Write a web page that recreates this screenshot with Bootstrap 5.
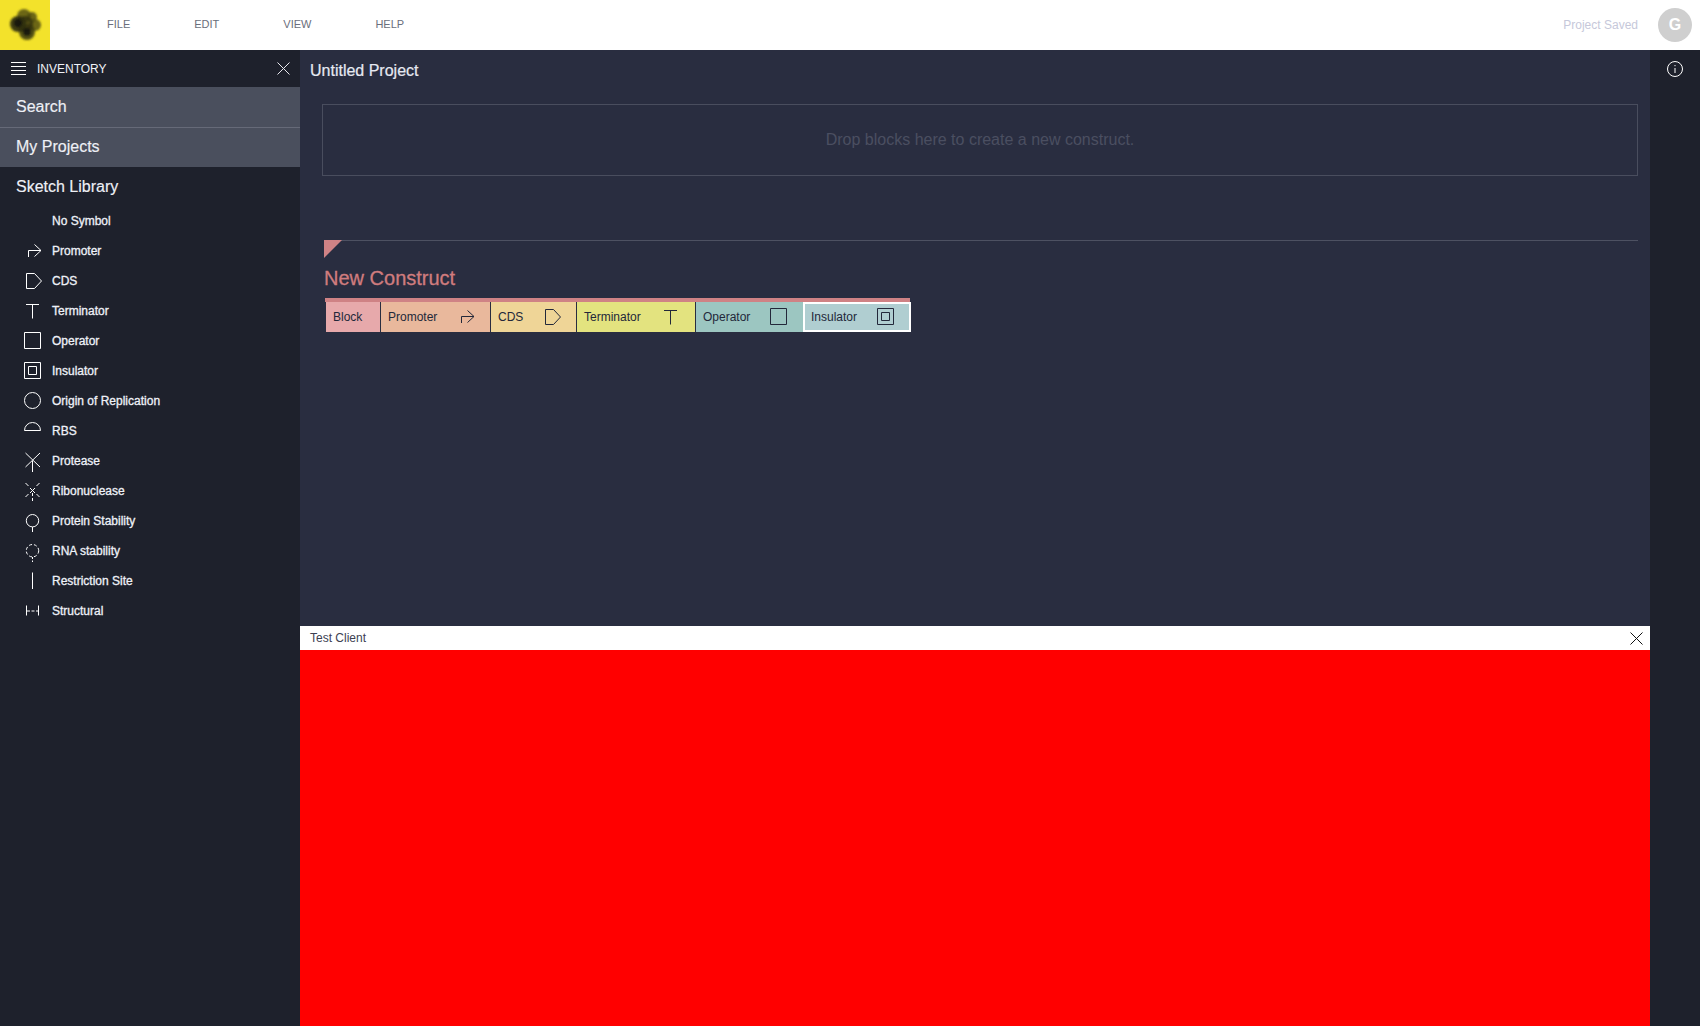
<!DOCTYPE html>
<html lang="en">
<head>
    <meta charset="UTF-8">
    <meta name="viewport" content="width=device-width, initial-scale=1.0">
    <title>Untitled Project</title>
    <link href="https://cdn.jsdelivr.net/npm/bootstrap@5.3.0/dist/css/bootstrap.min.css" rel="stylesheet">
    <style>
        html, body { height: 100%; overflow: hidden; }
        body { font-family: "Liberation Sans", Arial, sans-serif; background: #292d40; }
        svg { display: block; }
        .app-root { height: 1026px; }

        /* top bar */
        .top-bar { height: 50px; background: #fff; flex: none; }
        .logo-box { width: 50px; height: 50px; background: #f3e22b; }
        .menu-list { padding-left: 57px; gap: 64px; }
        .menu-item { font-size: 11px; color: #6a6e7b; margin-top: -2px; }
        .save-status { font-size: 12px; color: #c6c8da; margin-right: 20px; margin-top: -1px; }
        .user-dot { width: 34px; height: 34px; border-radius: 50%; background: #cfcfcf; color: #fff; font-size: 16px; font-weight: 700; margin-right: 8px; }

        /* inventory */
        .inv-side { width: 300px; background: #1e212c; color: #fff; flex: none; }
        .inv-head { height: 37px; padding: 0 10px 0 11px; font-size: 12px; color: #f0f2f8; }
        .inv-head-label { margin-left: 11px; }
        .inv-section { height: 39px; padding-left: 16px; font-size: 16px; color: #eef0f6; -webkit-text-stroke: .15px #eef0f6; }
        .inv-section-on { background: #4a4f5d; }
        .inv-rule { border-bottom: 1px solid #666a78; height: 41px; }
        .inv-lift { padding-bottom: 2px; }
        .sym-row { height: 30px; font-size: 12px; color: #eef1f8; -webkit-text-stroke: .3px #eef1f8; }
        .sym-icon { width: 52px; padding-left: 22px; flex: none; }
        .sym-icon svg { width: 22px; height: 22px; }

        /* canvas */
        .work-area { min-width: 0; }
        .project-title { font-size: 16px; color: #e6e9f2; padding: 9px 0 0 10px; height: 54px; -webkit-text-stroke: .2px #e6e9f2; }
        .drop-zone { height: 72px; margin: 0 12px 0 22px; border: 1px solid #494d5e; color: #4b4f61; font-size: 16px; }
        .construct-wrap { margin: 64px 12px 0 24px; border-top: 1px solid #4d5162; position: relative; height: 386px; }
        .corner-mark { position: absolute; left: 0; top: -1px; width: 0; height: 0; border-style: solid; border-width: 18px 18px 0 0; border-color: #cf8285 transparent transparent transparent; }
        .construct-name { font-size: 20px; color: #d07c7e; padding-top: 26px; height: 57px; line-height: 23px; -webkit-text-stroke: .3px #d07c7e; }
        .block-strip { width: 585px; margin-left: 1px; border-top: 4px solid #cf8285; height: 34px; }
        .seq-block { flex: none; height: 30px; font-size: 12px; color: #23283a; padding: 0 13px 0 7px; border-left: 1px solid #292d40; }
        .seq-block svg { width: 22px; height: 22px; margin-left: auto; }
        .b-block { width: 55px; background: #e7a9ab; }
        .b-promoter { width: 110px; background: #e9b89c; }
        .b-cds { width: 86px; background: #efd597; }
        .b-term { width: 119px; background: #e3e37f; }
        .b-op { width: 108px; background: #9cc6c1; }
        .b-ins { width: 108px; background: #b0ced1; border: 2px solid #fff; padding: 0 12px 0 6px; }

        /* test client */
        .test-head { height: 24px; background: #fff; font-size: 12px; color: #3d4152; padding: 0 7px 0 10px; flex: none; }
        .test-body { height: 376px; background: #f00; flex: none; }

        /* right rail */
        .info-rail { width: 50px; background: #1e212c; flex: none; padding-top: 11px; }
    </style>
</head>
<body>
    <div class="app-root d-flex flex-column">
        <!-- top bar -->
        <header class="top-bar d-flex align-items-center">
            <div class="logo-box d-flex align-items-center justify-content-center">
                <svg width="36" height="36" viewBox="0 0 36 36">
                    <defs><filter id="soft"><feGaussianBlur stdDeviation="1.2"/></filter></defs>
                    <g filter="url(#soft)">
                        <circle cx="17" cy="9" r="7" fill="#4a4712" fill-opacity=".8"/>
                        <circle cx="25" cy="10" r="5" fill="#4a4712" fill-opacity=".8"/>
                        <circle cx="28" cy="18" r="6" fill="#4a4712" fill-opacity=".8"/>
                        <circle cx="20" cy="25" r="8" fill="#3b3910" fill-opacity=".85"/>
                        <circle cx="11" cy="17" r="8" fill="#2a2a10" fill-opacity=".9"/>
                        <circle cx="18" cy="17" r="8" fill="#2f2e10" fill-opacity=".8"/>
                        <circle cx="11" cy="16" r="4" fill="#111108" fill-opacity=".8"/>
                        <circle cx="20" cy="25" r="4" fill="#111108" fill-opacity=".8"/>
                    </g>
                </svg>
            </div>
            <div class="menu-list d-flex">
                <div class="menu-item">FILE</div>
                <div class="menu-item">EDIT</div>
                <div class="menu-item">VIEW</div>
                <div class="menu-item">HELP</div>
            </div>
            <div class="ms-auto d-flex align-items-center">
                <span class="save-status">Project Saved</span>
                <div class="user-dot d-flex align-items-center justify-content-center">G</div>
            </div>
        </header>

        <div class="d-flex flex-grow-1 overflow-hidden">
            <!-- inventory -->
            <aside class="inv-side">
                <div class="inv-head d-flex align-items-center">
                    <svg width="15" height="13" viewBox="0 0 15 13" stroke="#fff" stroke-width="1"><path d="M0 .5h15M0 4.500h15M0 8.500h15M0 12.500h15"/></svg>
                    <span class="inv-head-label">INVENTORY</span>
                    <svg class="ms-auto" width="13" height="13" viewBox="0 0 13 13" stroke="#e8e8ee" fill="none"><path d="M.5.5l12 12M12.500.5l-12 12"/></svg>
                </div>
                <div class="inv-section inv-section-on inv-rule d-flex align-items-center">Search</div>
                <div class="inv-section inv-section-on inv-lift d-flex align-items-center">My Projects</div>
                <div class="inv-section d-flex align-items-center">Sketch Library</div>
                <div>
                    <div class="sym-row d-flex align-items-center"><div class="sym-icon"></div>No Symbol</div>
                    <div class="sym-row d-flex align-items-center"><div class="sym-icon"><svg viewBox="0 0 22 22" fill="none" stroke="#fff"><path d="M6.500 17v-6.500h12.500M12.500 4.500l6.500 6-6.500 6"/></svg></div>Promoter</div>
                    <div class="sym-row d-flex align-items-center"><div class="sym-icon"><svg viewBox="0 0 22 22" fill="none" stroke="#fff"><path d="M4.500 3.500h8l7 7.500-7 7.500h-8z"/></svg></div>CDS</div>
                    <div class="sym-row d-flex align-items-center"><div class="sym-icon"><svg viewBox="0 0 22 22" fill="none" stroke="#fff"><path d="M4 4.500h13M10.500 4.500v14"/></svg></div>Terminator</div>
                    <div class="sym-row d-flex align-items-center"><div class="sym-icon"><svg viewBox="0 0 22 22" fill="none" stroke="#fff"><path d="M2.500 2.500h16v16h-16z"/></svg></div>Operator</div>
                    <div class="sym-row d-flex align-items-center"><div class="sym-icon"><svg viewBox="0 0 22 22" fill="none" stroke="#fff"><path d="M2.500 2.500h16v16h-16zM6.500 6.500h8v8h-8z"/></svg></div>Insulator</div>
                    <div class="sym-row d-flex align-items-center"><div class="sym-icon"><svg viewBox="0 0 22 22" fill="none" stroke="#fff"><circle cx="10.500" cy="10.500" r="8"/></svg></div>Origin of Replication</div>
                    <div class="sym-row d-flex align-items-center"><div class="sym-icon"><svg viewBox="0 0 22 22" fill="none" stroke="#fff"><path d="M2.500 10.500a8 8 0 0 1 16 0z"/></svg></div>RBS</div>
                    <div class="sym-row d-flex align-items-center"><div class="sym-icon"><svg viewBox="0 0 22 22" fill="none" stroke="#fff"><path d="M3.500 3l14.500 14M18 3L3.500 17M10.500 11v11"/></svg></div>Protease</div>
                    <div class="sym-row d-flex align-items-center"><div class="sym-icon"><svg viewBox="0 0 22 22" fill="none" stroke="#fff"><path d="M3.500 3l3 3M17.500 3l-3 3M8 8l5 5M13 8l-5 5M3.500 17l3-3M17.500 17l-3-3M10.500 13v3M10.500 18v3"/></svg></div>Ribonuclease</div>
                    <div class="sym-row d-flex align-items-center"><div class="sym-icon"><svg viewBox="0 0 22 22" fill="none" stroke="#fff"><circle cx="10.500" cy="10.700" r="6.200"/><path d="M10.500 17v5"/></svg></div>Protein Stability</div>
                    <div class="sym-row d-flex align-items-center"><div class="sym-icon"><svg viewBox="0 0 22 22" fill="none" stroke="#fff"><circle cx="10.500" cy="10.700" r="6.200" stroke-dasharray="3 2"/><path d="M10.500 17v5" stroke-dasharray="2 1.500"/></svg></div>RNA stability</div>
                    <div class="sym-row d-flex align-items-center"><div class="sym-icon"><svg viewBox="0 0 22 22" fill="none" stroke="#fff"><path d="M10.500 2.500V19"/></svg></div>Restriction Site</div>
                    <div class="sym-row d-flex align-items-center"><div class="sym-icon"><svg viewBox="0 0 22 22" fill="none" stroke="#fff"><path d="M4.500 5.500v10M16.500 5.500v10"/><path d="M5 11h11" stroke-dasharray="3 1.500"/></svg></div>Structural</div>
                </div>
            </aside>

            <!-- canvas and test client -->
            <main class="work-area flex-grow-1 d-flex flex-column">
                <div class="flex-grow-1 overflow-hidden">
                    <div class="project-title">Untitled Project</div>
                    <div class="drop-zone d-flex align-items-center justify-content-center">Drop blocks here to create a new construct.</div>
                    <div class="construct-wrap">
                        <div class="corner-mark"></div>
                        <div class="construct-name">New Construct</div>
                        <div class="block-strip d-flex">
                            <div class="seq-block b-block d-flex align-items-center">Block</div>
                            <div class="seq-block b-promoter d-flex align-items-center">Promoter
                                <svg viewBox="0 0 22 22" fill="none" stroke="#23283a"><path d="M6.500 17v-6.500h12.500M12.500 4.500l6.500 6-6.500 6"/></svg>
                            </div>
                            <div class="seq-block b-cds d-flex align-items-center">CDS
                                <svg viewBox="0 0 22 22" fill="none" stroke="#23283a"><path d="M4.500 3.500h8l7 7.500-7 7.500h-8z"/></svg>
                            </div>
                            <div class="seq-block b-term d-flex align-items-center">Terminator
                                <svg viewBox="0 0 22 22" fill="none" stroke="#23283a"><path d="M4 4.500h13M10.500 4.500v14"/></svg>
                            </div>
                            <div class="seq-block b-op d-flex align-items-center">Operator
                                <svg viewBox="0 0 22 22" fill="none" stroke="#23283a"><path d="M2.500 2.500h16v16h-16z"/></svg>
                            </div>
                            <div class="seq-block b-ins d-flex align-items-center">Insulator
                                <svg viewBox="0 0 22 22" fill="none" stroke="#23283a"><path d="M2.500 2.500h16v16h-16zM6.500 6.500h8v8h-8z"/></svg>
                            </div>
                        </div>
                    </div>
                </div>
                <div class="test-head d-flex align-items-center justify-content-between">
                    <span>Test Client</span>
                    <svg width="13" height="13" viewBox="0 0 13 13" stroke="#111" fill="none"><path d="M.5.5l12 12M12.500.5l-12 12"/></svg>
                </div>
                <div class="test-body"></div>
            </main>

            <!-- right rail -->
            <aside class="info-rail d-flex justify-content-center">
                <svg width="16" height="16" viewBox="0 0 16 16" fill="none" stroke="#fff"><circle cx="8" cy="8" r="7.500"/><path d="M8 7v5"/><path d="M8 4v1.200"/></svg>
            </aside>
        </div>
    </div>
    <script src="https://cdn.jsdelivr.net/npm/bootstrap@5.3.0/dist/js/bootstrap.bundle.min.js"></script>
</body>
</html>
